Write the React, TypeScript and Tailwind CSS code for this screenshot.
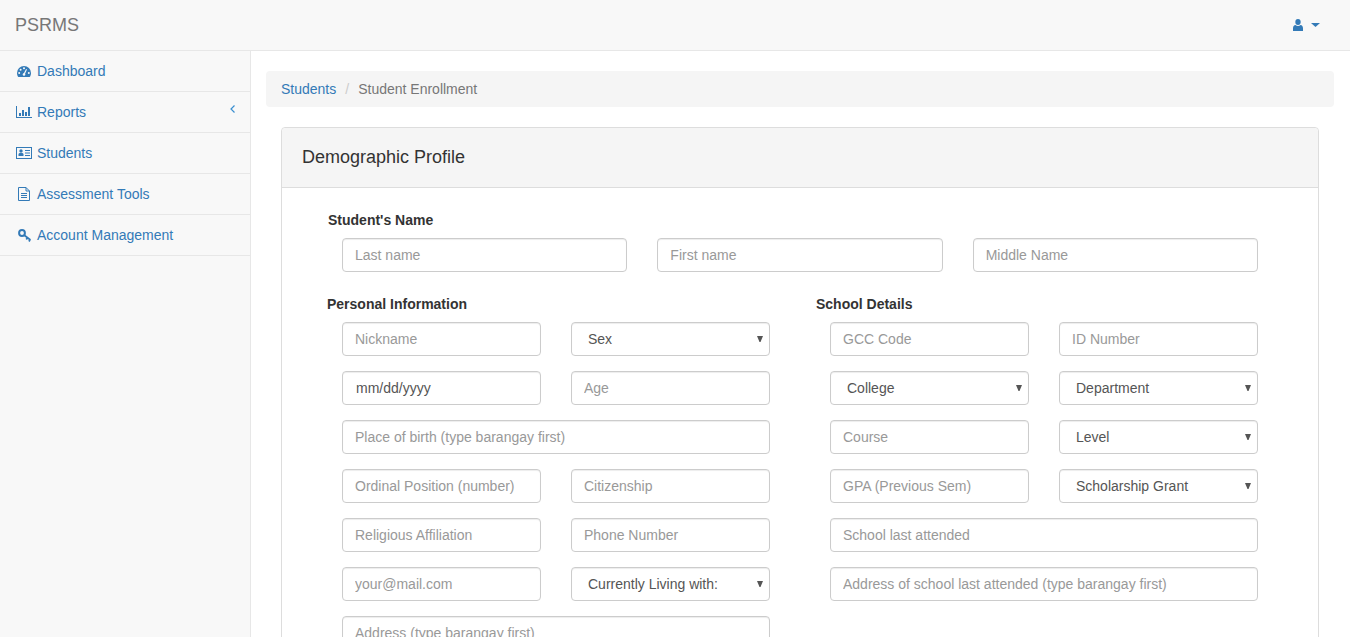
const inputClass =
  "w-full h-[34px] px-3 border border-[#ccc] rounded bg-white text-sm text-[#555] placeholder:text-[#999] shadow-[inset_0_1px_1px_rgba(0,0,0,0.075)]";

const Field = ({ ph, className = '' }: { ph: string; className?: string }) => (
  <input type="text" placeholder={ph} className={`${inputClass} ${className}`} />
);

const Select = ({ label }: { label: string }) => (
  <div className="relative">
    <select className={`${inputClass} pl-4 appearance-none cursor-pointer`} defaultValue={label}>
      <option>{label}</option>
    </select>
    {/* small native looking arrow */}
    <svg width="6" height="6" viewBox="0 0 6 6" className="absolute right-[7px] top-[14px] pointer-events-none">
      <path d="M0 0h6L3.500 6h-1z" fill="#555" />
    </svg>
  </div>
);

const DashboardIcon = () => (
  <svg width="14" height="11" viewBox="0 0 14 11">
    <path d="M7 0A7 7 0 0 0 0 7c0 1.500.5 3 1.300 4h11.400c.8-1 1.300-2.500 1.300-4A7 7 0 0 0 7 0z" fill="currentColor" />
    <g fill="#f8f8f8">
      <circle cx="2.200" cy="7" r="1" />
      <circle cx="3.600" cy="3.700" r="1" />
      <circle cx="7" cy="2.200" r="1" />
      <circle cx="11.800" cy="7" r="1" />
      <circle cx="7" cy="8.500" r="1.300" />
      <path d="M6.400 8l2.700-5 .9.400-2.300 5.200z" />
    </g>
  </svg>
);

const ChartIcon = () => (
  <svg width="16" height="12" viewBox="0 0 16 12" fill="currentColor">
    <path d="M0 0h1v11h15v1H0z" />
    <path d="M3 7h2v3H3zM6 4h2v6H6zM9 6h2v4H9zM12 1h2v9h-2z" />
  </svg>
);

const CardIcon = () => (
  <svg width="16" height="12" viewBox="0 0 16 12" fill="currentColor">
    <rect x="0.500" y="0.500" width="15" height="11" fill="none" stroke="currentColor" />
    <circle cx="5" cy="4" r="1.700" />
    <path d="M2.500 9V7.500C2.500 6.500 3.200 6 4 6h2c.8 0 1.500.5 1.500 1.500V9z" />
    <path d="M9 3h5v1H9zM9 5.500h5v1H9zM9 8h5v1H9z" />
  </svg>
);

const FileIcon = () => (
  <svg width="12" height="14" viewBox="0 0 12 14" fill="none" stroke="currentColor">
    <path d="M.5.5H8L11.500 4v9.500H.5zM8 .5V4h3.500" />
    <path d="M3 6.500h6M3 8.500h6M3 10.500h6" />
  </svg>
);

const KeyIcon = () => (
  <svg width="13" height="13" viewBox="0 0 13 13" fill="none" stroke="currentColor">
    <circle cx="4" cy="4" r="2.900" strokeWidth="2" />
    <path d="M6 6l6.500 5M9.500 8.500L8.300 10.500M12 10.500l-1 2" strokeWidth="1.700" />
  </svg>
);

const menu = [
  { label: 'Dashboard', icon: <DashboardIcon /> },
  { label: 'Reports', icon: <ChartIcon />, arrow: true },
  { label: 'Students', icon: <CardIcon /> },
  { label: 'Assessment Tools', icon: <FileIcon /> },
  { label: 'Account Management', icon: <KeyIcon /> },
];

const Sidebar = () => (
  <aside className="w-[251px] shrink-0 bg-[#f8f8f8] border-r border-[#e7e7e7]">
    {menu.map((m) => (
      <a key={m.label} href="#" className="relative flex items-center h-[41px] border-b border-[#e7e7e7] text-sm text-[#337ab7]">
        <span className="flex justify-center w-4 ml-4 mr-[5px]">{m.icon}</span>
        {m.label}
        {m.arrow && (
          <svg width="5" height="8" viewBox="0 0 5 8" fill="none" stroke="#3a8fd0" strokeWidth="1.200" className="absolute right-[15px] top-[13px]">
            <path d="M4.500.5L1 4l3.500 3.500" />
          </svg>
        )}
      </a>
    ))}
  </aside>
);

export default function App() {
  return (
    <div className="h-[637px] overflow-hidden flex flex-col bg-white text-sm text-[#333] [font-family:'Liberation_Sans',Arial,sans-serif]">
      <nav className="h-[51px] shrink-0 flex items-center justify-between pl-[15px] pr-[30px] bg-[#f8f8f8] border-b border-[#e7e7e7]">
        <a href="#" className="text-lg text-[#777]">PSRMS</a>
        <a href="#" className="flex items-center gap-2 text-[#337ab7]">
          <svg width="10" height="12" viewBox="0 0 10 12" fill="currentColor">
            <ellipse cx="5" cy="3" rx="2.700" ry="3" />
            <path d="M0 12V9.500C0 7.500 1 6 2.500 6c.7.600 1.500 1 2.500 1s1.800-.4 2.500-1C9 6 10 7.500 10 9.500V12z" />
          </svg>
          <svg width="9" height="4" viewBox="0 0 9 4" fill="currentColor">
            <path d="M0 0h9L4.500 4z" />
          </svg>
        </a>
      </nav>

      <div className="flex flex-1 min-h-0">
        <Sidebar />
        <main className="flex-1 min-w-0 pt-5 pl-[15px] pr-4">
          <div className="flex items-center h-9 px-[15px] mb-5 rounded bg-[#f5f5f5]">
            <a href="#" className="text-[#337ab7]">Students</a>
            <span className="px-[9px] text-[#ccc]">/</span>
            <span className="text-[#777]">Student Enrollment</span>
          </div>

          <section className="mx-[15px] border border-[#ddd] rounded bg-white">
            <div className="flex items-center h-[60px] pl-5 pb-[2px] bg-[#f5f5f5] border-b border-[#ddd] rounded-t text-lg">
              Demographic Profile
            </div>
            <div className="pt-[22px] pl-[45px] pr-[60px]">
              <h4 className="ml-px mb-2 font-bold leading-5">Student's Name</h4>
              <div className="grid grid-cols-3 gap-[30px] ml-[15px] mb-[22px]">
                <Field ph="Last name" />
                <Field ph="First name" />
                <Field ph="Middle Name" />
              </div>

              <div className="grid grid-cols-[443px_442px] gap-x-[46px]">
                <div>
                  <h4 className="mb-2 font-bold leading-5">Personal Information</h4>
                  <div className="grid grid-cols-2 gap-x-[30px] gap-y-[15px] ml-[15px]">
                    <Field ph="Nickname" />
                    <Select label="Sex" />
                    <input type="text" defaultValue="mm/dd/yyyy" className={`${inputClass} pl-[13px]`} />
                    <Field ph="Age" />
                    <Field ph="Place of birth (type barangay first)" className="col-span-2" />
                    <Field ph="Ordinal Position (number)" />
                    <Field ph="Citizenship" />
                    <Field ph="Religious Affiliation" />
                    <Field ph="Phone Number" />
                    <Field ph="your@mail.com" />
                    <Select label="Currently Living with:" />
                    <Field ph="Address (type barangay first)" className="col-span-2" />
                  </div>
                </div>
                <div>
                  <h4 className="mb-2 font-bold leading-5">School Details</h4>
                  <div className="grid grid-cols-2 gap-x-[30px] gap-y-[15px] ml-[14px]">
                    <Field ph="GCC Code" />
                    <Field ph="ID Number" />
                    <Select label="College" />
                    <Select label="Department" />
                    <Field ph="Course" />
                    <Select label="Level" />
                    <Field ph="GPA (Previous Sem)" />
                    <Select label="Scholarship Grant" />
                    <Field ph="School last attended" className="col-span-2" />
                    <Field ph="Address of school last attended (type barangay first)" className="col-span-2" />
                  </div>
                </div>
              </div>
            </div>
          </section>
        </main>
      </div>
    </div>
  );
}
